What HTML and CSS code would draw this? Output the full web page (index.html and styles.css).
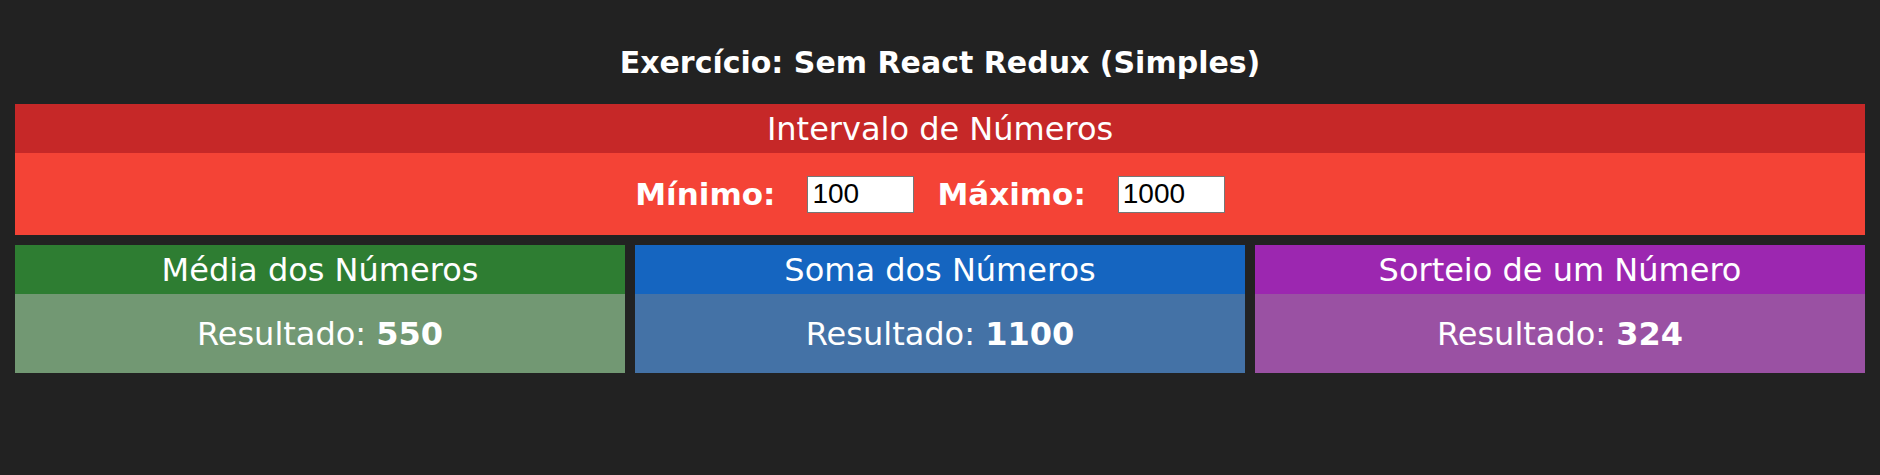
FILE: index.html
```html
<!DOCTYPE html>
<html lang="pt-BR">
<head>
<meta charset="utf-8">
<title>Exercício: Sem React Redux (Simples)</title>
<link rel="stylesheet" href="styles.css">
</head>
<body>
<div class="app">
  <h1 class="title">Exercício: Sem React Redux (Simples)</h1>
  <section class="card card-red card-wide">
    <div class="card-header">Intervalo de Números</div>
    <div class="card-body interval">
      <label class="field">
        <strong class="field-label">Mínimo:</strong>
        <input class="field-input" type="number" value="100">
      </label>
      <label class="field">
        <strong class="field-label">Máximo:</strong>
        <input class="field-input" type="number" value="1000">
      </label>
    </div>
  </section>
  <div class="cards">
    <section class="card card-green">
      <div class="card-header">Média dos Números</div>
      <div class="card-body"><span>Resultado: <strong>550</strong></span></div>
    </section>
    <section class="card card-blue">
      <div class="card-header">Soma dos Números</div>
      <div class="card-body"><span>Resultado: <strong>1100</strong></span></div>
    </section>
    <section class="card card-purple">
      <div class="card-header">Sorteio de um Número</div>
      <div class="card-body"><span>Resultado: <strong>324</strong></span></div>
    </section>
  </div>
</div>
</body>
</html>
```
FILE: styles.css
```css
html, body {
  margin: 0;
  padding: 0;
  background: #222222;
  height: 100%;
}
body {
  font-family: "DejaVu Sans", Verdana, sans-serif;
  color: #ffffff;
}
.app {
  padding: 0 15px;
  display: flex;
  flex-direction: column;
}
.title {
  margin: 0;
  height: 104px;
  display: flex;
  align-items: center;
  justify-content: center;
  padding-top: 20px;
  box-sizing: border-box;
  font-size: 30px;
  font-weight: bold;
}
.card {
  display: flex;
  flex-direction: column;
}
.card-header {
  height: 49px;
  display: flex;
  align-items: center;
  justify-content: center;
  font-size: 32px;
  line-height: 1;
}
.card-body {
  height: 79px;
  display: flex;
  align-items: center;
  justify-content: center;
  font-size: 32px;
}
.card-wide .card-body {
  height: 82px;
}
.interval {
  gap: 23px;
  padding-right: 20px;
}
.field {
  display: flex;
  align-items: center;
  gap: 32px;
}
.field-label {
  font-family: "DejaVu Sans", Verdana, sans-serif;
  font-size: 31px;
  font-weight: bold;
}
.field-input {
  width: 107px;
  height: 37px;
  box-sizing: border-box;
  border: 1px solid #767676;
  padding: 0 2px 0 4px;
  font-family: "Liberation Sans", Arial, sans-serif;
  font-size: 28px;
  color: #000;
  background: #fff;
  -moz-appearance: textfield;
}
.field-input::-webkit-outer-spin-button,
.field-input::-webkit-inner-spin-button {
  -webkit-appearance: none;
  margin: 0;
}
.cards {
  margin-top: 10px;
  display: grid;
  grid-template-columns: repeat(3, 1fr);
  gap: 10px;
}
.card-red .card-header { background: #c62828; }
.card-red .card-body { background: #f44336; }
.card-green .card-header { background: #2e7d32; }
.card-green .card-body { background: #729873; }
.card-blue .card-header { background: #1565c0; }
.card-blue .card-body { background: #4472a6; }
.card-purple .card-header { background: #9c27b0; }
.card-purple .card-body { background: #9a51a3; }
```
